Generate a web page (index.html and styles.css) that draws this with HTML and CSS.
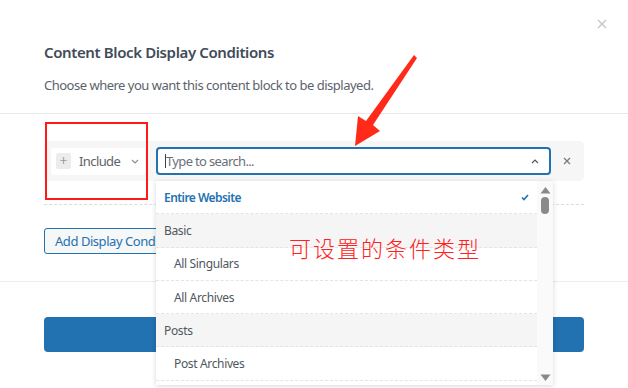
FILE: index.html
```html
<!DOCTYPE html>
<html>
<head>
<meta charset="utf-8">
<link rel="stylesheet" href="styles.css">
</head>
<body>
<div class="modal">
  <button class="close" aria-label="Close">
    <svg width="10" height="10" viewBox="0 0 10 10"><path d="M1 1L9 9M9 1L1 9" stroke="#c3c4c7" stroke-width="1.3" fill="none"/></svg>
  </button>
  <header class="head">
    <h2 class="title">Content Block Display Conditions</h2>
    <p class="subtitle">Choose where you want this content block to be displayed.</p>
  </header>
  <section class="body">
    <div class="cond-row">
      <div class="include">
        <span class="plus">+</span>
        <span class="include-label">Include</span>
        <svg class="chev" width="8" height="5" viewBox="0 0 8 5"><path d="M1 1L4 4L7 1" stroke="#8c8f94" stroke-width="1.2" fill="none"/></svg>
      </div>
      <div class="search-wrap">
        <div class="search">
          <span class="caret"></span>
          <span class="placeholder">Type to search...</span>
          <svg class="chev-up" width="8" height="5" viewBox="0 0 8 5"><path d="M1 4L4 1L7 4" stroke="#50575e" stroke-width="1.2" fill="none"/></svg>
        </div>
        <div class="dropdown">
          <ul class="options">
            <li class="opt selected">Entire Website
              <svg class="check" width="8" height="7" viewBox="0 0 8 7"><path d="M1 3.5L3 5.5L7 1" stroke="#2271b1" stroke-width="1.6" fill="none"/></svg>
            </li>
            <li class="opt group">Basic</li>
            <li class="opt sub">All Singulars</li>
            <li class="opt sub">All Archives</li>
            <li class="opt group">Posts</li>
            <li class="opt sub">Post Archives</li>
          </ul>
          <div class="scrollbar">
            <svg width="11" height="8" viewBox="0 0 11 8"><path d="M0.5 7.5L5.5 1L10.5 7.5Z" fill="#8a8a8a"/></svg>
            <span class="thumb"></span>
            <span class="track-space"></span>
            <svg width="11" height="8" viewBox="0 0 11 8"><path d="M0.5 0.5L5.5 7L10.5 0.5Z" fill="#8a8a8a"/></svg>
          </div>
        </div>
      </div>
      <button class="remove" aria-label="Remove">
        <svg width="8" height="8" viewBox="0 0 8 8"><path d="M1 1L7 7M7 1L1 7" stroke="#787c82" stroke-width="1.3" fill="none"/></svg>
      </button>
    </div>
    <div class="dashed"></div>
    <button class="add-btn">Add Display Conditions</button>
  </section>
  <footer class="foot">
    <button class="save"></button>
  </footer>

  <div class="note-box"></div>
  <div class="note-text">可设置的条件类型</div>
  <svg class="note-arrow" width="628" height="388" viewBox="0 0 628 388">
    <polygon points="355,146 358,116 366,121 414,55 417,58 373,125 380,131" fill="#ff2a1a"/>
  </svg>
</div>
</body>
</html>
```

FILE: styles.css
```css
* { box-sizing: border-box; }
html, body { margin: 0; padding: 0; background: #fff; }
body {
  font-family: "Noto Sans", "Open Sans", "Liberation Sans", sans-serif;
  width: 628px;
  height: 388px;
  overflow: hidden;
}
.modal {
  position: relative;
  width: 628px;
  height: 388px;
  background: #fff;
}
.close {
  position: absolute;
  top: 19px;
  right: 21px;
  border: 0;
  background: none;
  padding: 0;
  width: 10px;
  height: 10px;
  display: flex;
}
.head {
  padding: 41px 44px 0;
  height: 114px;
  border-bottom: 1px solid #e8e8e8;
}
.title {
  margin: 0;
  font-size: 15px;
  line-height: 22px;
  font-weight: 600;
  color: #414b59;
  letter-spacing: -0.38px;
}
.subtitle {
  margin: 13px 0 0;
  font-size: 13px;
  line-height: 18px;
  color: #5b636c;
  letter-spacing: -0.5px;
}
.body {
  padding: 27px 44px 0;
  height: 168px;
  border-bottom: 1px solid #ececec;
}
.cond-row {
  display: flex;
  align-items: center;
  height: 40px;
  background: #f6f6f6;
  border-radius: 5px;
  padding: 0 7px;
}
.include {
  display: flex;
  align-items: center;
  width: 94px;
  height: 27px;
  background: #fff;
  border-radius: 3px;
  padding: 0 5px;
}
.plus {
  width: 15px;
  height: 16px;
  background: #ececec;
  border-radius: 2px;
  color: #787c82;
  font-size: 14px;
  line-height: 15px;
  text-align: center;
  font-weight: 300;
}
.include-label {
  margin-left: 8px;
  font-size: 13px;
  color: #5f6368;
  flex: 1;
  letter-spacing: -0.6px;
}
.chev { margin-right: 1px; }
.search-wrap {
  position: relative;
  margin-left: 11px;
  width: 395px;
}
.search {
  display: flex;
  align-items: center;
  height: 28px;
  border: 2px solid #2271b1;
  border-radius: 4px;
  background: #fff;
  padding: 0 10px 0 7px;
}
.caret {
  width: 1px;
  height: 14px;
  background: #3c434a;
}
.placeholder {
  flex: 1;
  font-size: 13px;
  color: #6b7078;
  letter-spacing: -0.65px;
}
.remove {
  border: 0;
  background: none;
  padding: 0;
  margin-left: 12px;
  width: 8px;
  height: 8px;
  display: flex;
}
.dashed {
  margin-top: 23px;
  border-top: 1px dashed #dcdcde;
}
.add-btn {
  margin-top: 23px;
  height: 26px;
  padding: 0 10px;
  background: #f6f7f7;
  border: 1px solid #2271b1;
  border-radius: 3px;
  color: #2271b1;
  font-family: inherit;
  font-size: 13px;
  letter-spacing: -0.45px;
}
.foot {
  padding: 35px 44px 0;
}
.save {
  display: block;
  width: 540px;
  height: 35px;
  background: #2271b1;
  border: 0;
  border-radius: 4px;
}
.dropdown {
  position: absolute;
  top: 34px;
  left: 0;
  width: 397px;
  height: 204px;
  background: #fff;
  box-shadow: 0 1px 5px rgba(0,0,0,0.16);
  display: flex;
  z-index: 2;
}
.options {
  list-style: none;
  margin: 0;
  padding: 0;
  flex: 1;
  overflow: hidden;
}
.opt {
  display: flex;
  align-items: center;
  height: 33.3px;
  border-bottom: 1px dashed #e4e4e4;
  font-size: 12px;
  color: #50575e;
  padding-left: 8px;
  letter-spacing: -0.35px;
}
.opt.selected {
  color: #2271b1;
  font-weight: 600;
  justify-content: space-between;
  padding-right: 8px;
  letter-spacing: -0.55px;
}
.opt.group {
  background: #f5f5f5;
}
.opt.sub {
  padding-left: 18px;
}
.scrollbar {
  width: 16px;
  background: #fafafa;
  display: flex;
  flex-direction: column;
  align-items: center;
  padding: 5px 0 3px;
}
.thumb {
  margin-top: 3px;
  width: 8px;
  height: 17px;
  border-radius: 4px;
  background: #8a8a8a;
}
.track-space { flex: 1; }
.note-box {
  position: absolute;
  left: 45px;
  top: 122px;
  width: 103px;
  height: 78px;
  border: 2px solid #ff1a1a;
  z-index: 3;
}
.note-text {
  position: absolute;
  left: 289px;
  top: 232px;
  font-family: "Noto Sans CJK SC", sans-serif;
  font-size: 22px;
  font-weight: 300;
  letter-spacing: 2px;
  line-height: 30px;
  color: #ff2020;
  z-index: 3;
}
.note-arrow {
  position: absolute;
  left: 0;
  top: 0;
  pointer-events: none;
  z-index: 4;
}
```
